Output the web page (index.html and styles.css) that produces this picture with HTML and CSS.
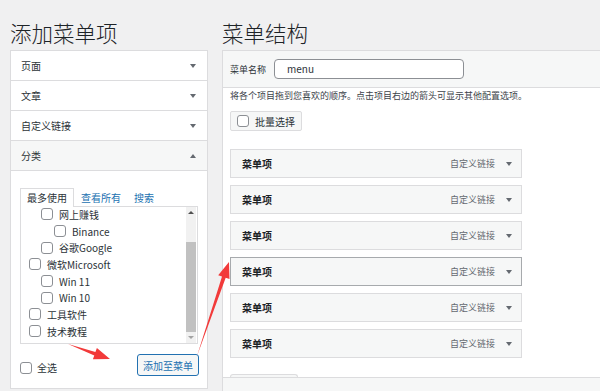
FILE: index.html
```html
<!DOCTYPE html>
<html>
<head>
    <title>菜单</title>
    <link rel="stylesheet" href="styles.css">
</head>
<body>
    <div class="wrap">
      <div class="col col--left">
        <h2 class="title">添加菜单项</h2>
        <div class="box">
          <div class="acc-row"><span>页面</span><i class="caret"></i></div>
          <div class="acc-row"><span>文章</span><i class="caret"></i></div>
          <div class="acc-row"><span>自定义链接</span><i class="caret"></i></div>
          <div class="acc-row acc-row--open"><span>分类</span><i class="caret caret--up"></i></div>
          <div class="acc-body">
            <div class="tabs">
              <span class="tab tab--on">最多使用</span>
              <span class="tab">查看所有</span>
              <span class="tab">搜索</span>
            </div>
            <div class="checklist">
              <div class="checklist-items">
                <div class="check lv1"><span class="cb"></span>网上赚钱</div>
                <div class="check lv2"><span class="cb"></span>Binance</div>
                <div class="check lv1"><span class="cb"></span>谷歌Google</div>
                <div class="check"><span class="cb"></span>微软Microsoft</div>
                <div class="check lv1"><span class="cb"></span>Win 11</div>
                <div class="check lv1"><span class="cb"></span>Win 10</div>
                <div class="check"><span class="cb"></span>工具软件</div>
                <div class="check"><span class="cb"></span>技术教程</div>
              </div>
              <div class="scrollbar">
                <i class="sb-arrow"></i>
                <div class="sb-track"><div class="sb-thumb"></div></div>
                <i class="sb-arrow sb-arrow--down"></i>
              </div>
            </div>
            <div class="acc-foot">
              <div class="check"><span class="cb"></span>全选</div>
              <button class="btn-add">添加至菜单</button>
            </div>
          </div>
        </div>
      </div>

      <div class="col col--right">
        <h2 class="title">菜单结构</h2>
        <div class="box box--menu">
          <div class="menu-head">
            <span class="menu-label">菜单名称</span>
            <span class="menu-input">menu</span>
          </div>
          <div class="menu-body">
            <p class="hint">将各个项目拖到您喜欢的顺序。点击项目右边的箭头可显示其他配置选项。</p>
            <div class="bulk"><span class="cb"></span>批量选择</div>
            <div class="items">
              <div class="item"><b>菜单项</b><span class="item-type">自定义链接</span><i class="caret"></i></div>
              <div class="item"><b>菜单项</b><span class="item-type">自定义链接</span><i class="caret"></i></div>
              <div class="item"><b>菜单项</b><span class="item-type">自定义链接</span><i class="caret"></i></div>
              <div class="item item--hover"><b>菜单项</b><span class="item-type">自定义链接</span><i class="caret"></i></div>
              <div class="item"><b>菜单项</b><span class="item-type">自定义链接</span><i class="caret"></i></div>
              <div class="item"><b>菜单项</b><span class="item-type">自定义链接</span><i class="caret"></i></div>
            </div>
            <div class="bulk-stub"></div>
          </div>
          <div class="menu-foot"></div>
        </div>
      </div>
    </div>

    <!-- red arrows drawn over the screenshot -->
    <svg class="marks" width="600" height="391" viewBox="0 0 600 391">
      <polygon fill="#f23a3a" points="68,344 95.4,351.9 96.9,347.9 110,359 92.9,359.3 94.3,355.4"/>
      <polygon fill="#f23a3a" points="197,356 222,276.5 218.2,275.2 229,262 229.5,279.1 225.7,277.8"/>
    </svg>
</body>
</html>
```

FILE: styles.css
```css
html, body {
  margin: 0;
  height: 391px;
  overflow: hidden;
}

body {
  background-color: #f0f0f1;
  color: #2c3338;
  font-family: "Noto Sans CJK SC", "Noto Sans", sans-serif;
  font-size: 10px;
}

.wrap {
  display: flex;
  gap: 14px;
  padding-left: 10px;
}

.col--left {
  width: 198px;
  flex: none;
}

.col--right {
  flex: 1;
  min-width: 0;
}

.title {
  margin: 0 0 3px;
  padding-top: 19px;
  font-size: 21.5px;
  font-weight: 300;
  line-height: 28px;
  color: #1d2327;
}

.box {
  background-color: #fff;
  border: 1px solid #dcdcde;
}

.box--menu {
  border-right: 0;
}

/* accordion on the left */

.acc-row {
  display: flex;
  align-items: center;
  justify-content: space-between;
  height: 29px;
  padding: 0 11px 0 10px;
  border-bottom: 1px solid #dcdcde;
}

.acc-row--open {
  background-color: #f6f7f7;
}

.caret {
  width: 0;
  height: 0;
  border-left: 3px solid transparent;
  border-right: 3px solid transparent;
  border-top: 4px solid #646970;
}

.caret--up {
  border-top: 0;
  border-bottom: 4px solid #646970;
}

.acc-body {
  padding: 17px 9px 12px;
}

.tabs {
  display: flex;
  align-items: flex-end;
  height: 18px;
}

.tab {
  padding: 0 6px;
  line-height: 17px;
  color: #2271b1;
}

.tab + .tab {
  margin-left: 1px;
}

.tab--on {
  position: relative;
  z-index: 1;
  border: 1px solid #dcdcde;
  border-bottom: 0;
  background-color: #fff;
  color: #2c3338;
  line-height: 18px;
  margin-bottom: -1px;
}

.checklist {
  display: flex;
  height: 136px;
  border: 1px solid #dcdcde;
  overflow: hidden;
}

.checklist-items {
  flex: 1;
  padding: 0 0 0 8px;
  margin-top: -1px;
}

.check {
  display: flex;
  align-items: center;
  gap: 6px;
  height: 16.7px;
  color: #2c3338;
}

.lv1 {
  padding-left: 12px;
}

.lv2 {
  padding-left: 25px;
}

.cb {
  display: inline-block;
  box-sizing: border-box;
  width: 12px;
  height: 12px;
  border: 1px solid #8c8f94;
  border-radius: 3px;
  background-color: #fff;
  flex: none;
}

.scrollbar {
  display: flex;
  flex-direction: column;
  align-items: center;
  width: 10px;
  margin-right: 1px;
  background-color: #f1f1f1;
}

.sb-arrow {
  margin: 4px 0;
  width: 0;
  height: 0;
  border-left: 3px solid transparent;
  border-right: 3px solid transparent;
  border-bottom: 3px solid #505050;
}

.sb-arrow--down {
  border-bottom: 0;
  border-top: 3px solid #a3a3a3;
}

.sb-track {
  flex: 1;
  width: 100%;
  display: flex;
  flex-direction: column;
  justify-content: flex-end;
}

.sb-thumb {
  height: 90px;
  background-color: #c1c1c1;
}

.acc-foot {
  display: flex;
  align-items: center;
  justify-content: space-between;
  margin-top: 10px;
}

.acc-foot .check {
  gap: 5px;
  margin-top: 5px;
}

.btn-add {
  height: 22px;
  padding: 0 5px;
  margin-right: -1px;
  border: 1px solid #2271b1;
  border-radius: 3px;
  background-color: #f6f7f7;
  color: #2271b1;
  font-family: inherit;
  font-size: 10px;
}

/* menu structure on the right */

.menu-head {
  display: flex;
  align-items: center;
  gap: 8px;
  height: 36px;
  padding: 0 7px;
  background-color: #f6f7f7;
  border-bottom: 1px solid #dcdcde;
}

.menu-label {
  font-size: 9px;
}

.menu-input {
  box-sizing: border-box;
  width: 190px;
  height: 20px;
  padding-left: 12px;
  border: 1px solid #8c8f94;
  border-radius: 4px;
  background-color: #fff;
  line-height: 18px;
  font-size: 10px;
}

.menu-body {
  padding: 2px 7px 0;
}

.hint {
  margin: 0;
  font-size: 9px;
  line-height: 12px;
  color: #3c434a;
}

.bulk {
  display: inline-flex;
  align-items: center;
  gap: 6px;
  box-sizing: border-box;
  height: 20px;
  margin-top: 9px;
  padding: 0 6px;
  border: 1px solid #dcdcde;
  border-radius: 2px;
  background-color: #f6f7f7;
}

.items {
  display: flex;
  flex-direction: column;
  gap: 7px;
  margin-top: 18px;
}

.item {
  display: flex;
  align-items: center;
  box-sizing: border-box;
  width: 292px;
  height: 29px;
  padding: 0 9px 0 11px;
  border: 1px solid #dcdcde;
  background-color: #f6f7f7;
}

.item b {
  flex: 1;
  font-weight: 600;
  color: #1d2327;
}

.item--hover {
  border-color: #a7aaad;
}

.item-type {
  margin-right: 11px;
  font-size: 9px;
  color: #646970;
}

.bulk-stub {
  box-sizing: border-box;
  width: 68px;
  height: 3px;
  margin-top: 16px;
  border: 1px solid #dcdcde;
  border-bottom: 0;
  border-radius: 3px 3px 0 0;
  background-color: #f6f7f7;
}

.menu-foot {
  height: 20px;
  border-top: 1px solid #dcdcde;
  background-color: #f6f7f7;
}

.marks {
  position: absolute;
  top: 0;
  left: 0;
  pointer-events: none;
}
```
